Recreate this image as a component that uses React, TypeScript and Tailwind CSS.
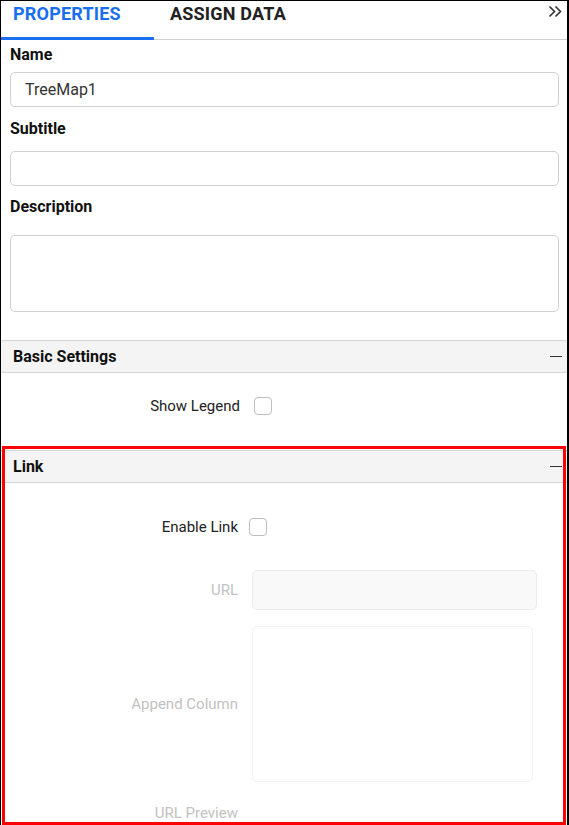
import React from "react";

const Checkbox = () => (
  <div className="w-[18px] h-[18px] rounded-[4px] border border-[#bdbdbd] bg-white" />
);

const SectionHeader = ({ title }: { title: string }) => (
  <div className="h-[33px] bg-[#f4f4f4] border-y border-[#d6d6d6] flex items-center justify-between pl-[12px] pr-[5px]">
    <span className="text-[16px] font-bold text-[#111]">{title}</span>
    <span className="block w-[12px] h-[1.5px] bg-[#333]" />
  </div>
);

export default function App() {
  return (
    <div className="w-[569px] h-[825px] relative overflow-hidden bg-white font-['Roboto',sans-serif]">
      <div className="h-full border-l border-t border-r-2 border-black flex flex-col">
        {/* Tabs */}
        <div className="h-[39px] border-b border-[#d0d0d0] flex items-start relative shrink-0">
          <div className="relative h-full w-[153px] pl-[12px] pt-[4px]">
            <span className="block text-[18px] leading-[18px] font-bold text-[#1a6ef0] tracking-[0.2px]">PROPERTIES</span>
            <span className="absolute left-0 right-0 bottom-[-1px] h-[3px] bg-[#1a6ef0]" />
          </div>
          <div className="h-full pl-[16px] pt-[4px]">
            <span className="block text-[18px] leading-[18px] font-bold text-[#222] tracking-[0.2px]">ASSIGN DATA</span>
          </div>
          <svg
            className="absolute right-[5px] top-[4px]"
            width="14"
            height="13"
            viewBox="0 0 14 13"
            fill="none"
            stroke="#333"
            strokeWidth="1.6"
          >
            <path d="M1.5 1.5 L6.5 6.5 L1.5 11.5" />
            <path d="M7.5 1.5 L12.5 6.5 L7.5 11.5" />
          </svg>
        </div>

        {/* General fields */}
        <div className="pl-[9px] pr-[8px]">
          <div className="mt-[5px] h-[20px] flex items-center text-[16px] font-bold text-[#111]">Name</div>
          <div className="mt-[7px] h-[35px] rounded-[5px] border border-[#d0d0d0] flex items-center pl-[14px] text-[16px] text-[#333]">
            TreeMap1
          </div>
          <div className="mt-[12px] h-[20px] flex items-center text-[16px] font-bold text-[#111]">Subtitle</div>
          <div className="mt-[12px] h-[35px] rounded-[5px] border border-[#d0d0d0]" />
          <div className="mt-[11px] h-[20px] flex items-center text-[16px] font-bold text-[#111]">Description</div>
          <div className="mt-[18px] h-[77px] rounded-[5px] border border-[#d0d0d0]" />
        </div>

        {/* Basic Settings */}
        <div className="mt-[28px]">
          <SectionHeader title="Basic Settings" />
          <div className="h-[77px] flex items-start pt-[24px]">
            <div className="w-[239px] text-right text-[15px] text-[#222] leading-[18px]">Show Legend</div>
            <div className="ml-[14px]">
              <Checkbox />
            </div>
          </div>
        </div>

        {/* Link */}
        <div>
          <SectionHeader title="Link" />
          <div className="pt-[35px] flex items-center">
            <div className="w-[237px] text-right text-[15px] text-[#222] leading-[18px]">Enable Link</div>
            <div className="ml-[11px]">
              <Checkbox />
            </div>
          </div>
          <div className="mt-[34px] flex items-center">
            <div className="w-[237px] text-right text-[15px] text-[#c2c2c2]">URL</div>
            <div className="ml-[14px] w-[285px] h-[40px] rounded-[5px] border border-[#ececec] bg-[#f9f9f9]" />
          </div>
          <div className="mt-[16px] flex items-center">
            <div className="w-[237px] text-right text-[15px] text-[#c2c2c2]">Append Column</div>
            <div className="ml-[14px] w-[281px] h-[156px] rounded-[5px] border border-[#f3f3f3] bg-white" />
          </div>
          <div className="mt-[20px] flex items-center">
            <div className="w-[237px] text-right text-[15px] text-[#c2c2c2]">URL Preview</div>
          </div>
        </div>
      </div>

      {/* Red highlight annotation */}
      <div className="absolute left-[2px] top-[446px] w-[564px] h-[379px] border-[3px] border-[#ff0000] pointer-events-none" />
    </div>
  );
}
